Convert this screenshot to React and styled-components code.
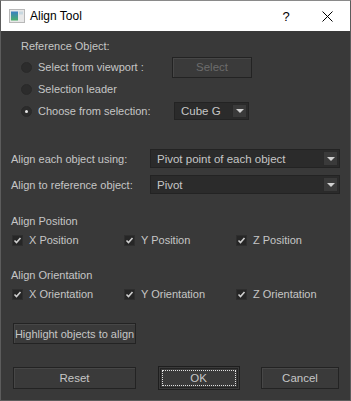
import React from 'react';
import styled, { createGlobalStyle } from 'styled-components';

const GlobalStyle = createGlobalStyle`
  html, body {
    margin: 0;
    padding: 0;
    background: #ffffff;
  }
  * {
    box-sizing: border-box;
  }
`;

const Window = styled.div`
  width: 351px;
  height: 401px;
  display: flex;
  flex-direction: column;
  border: 1px solid #5c5c5c;
  border-top-color: #8a8a8a;
  background: #393939;
  font-family: "Liberation Sans", Arial, sans-serif;
  font-size: 11px;
  color: #c6c6c6;
  overflow: hidden;
`;

const TitleBar = styled.div`
  height: 30px;
  flex-shrink: 0;
  display: flex;
  align-items: center;
  background: #ffffff;
  color: #000000;
  padding-left: 8px;
`;

const TitleText = styled.span`
  font-size: 12px;
  margin-left: 5px;
  flex: 1;
`;

const TitleButton = styled.div`
  width: ${props => props.w}px;
  height: 30px;
  display: flex;
  align-items: center;
  justify-content: center;
  font-size: 13px;
  color: #000;
`;

const Body = styled.div`
  flex: 1;
  display: flex;
  flex-direction: column;
  padding: 8px 11px 0 9px;
`;

const GroupLabel = styled.div`
  height: 14px;
  line-height: 14px;
  padding-left: ${props => props.indent || 0}px;
`;

const RefRows = styled.div`
  display: flex;
  flex-direction: column;
  padding-left: 11px;
  margin-top: 3px;
`;

const RefRow = styled.div`
  display: grid;
  grid-template-columns: 151px auto;
  align-items: center;
  height: 22px;
`;

const RadioLabel = styled.label`
  display: flex;
  align-items: center;
  gap: 6px;
`;

const RadioDot = styled.span`
  width: 11px;
  height: 11px;
  border-radius: 50%;
  background: #2c2c2c;
  border: 1px solid #2a2a2a;
  display: flex;
  align-items: center;
  justify-content: center;

  &::after {
    content: '';
    width: 3px;
    height: 3px;
    border-radius: 50%;
    background: ${props => (props.checked ? '#e6e6e6' : 'transparent')};
  }
`;

const Button = styled.div`
  width: ${props => props.w}px;
  height: ${props => props.h || 22}px;
  display: flex;
  align-items: center;
  justify-content: center;
  white-space: nowrap;
  background: #3a3a3a;
  border: 1px solid #232323;
  box-shadow: inset 1px 1px 0 #474747;
  color: ${props => (props.disabled ? '#6c6c6c' : '#c6c6c6')};
  font-size: ${props => props.fs || 11.5}px;
`;

const DefaultButton = styled.div`
  width: 82px;
  height: 24px;
  padding: 1px;
  background: #3a3a3a;
  border: 1px solid #1e1e1e;
  display: flex;
`;

const DefaultInner = styled.div`
  flex: 1;
  display: flex;
  align-items: center;
  justify-content: center;
  border: 1px solid #232323;
  outline: 1px dotted #e0e0e0;
  outline-offset: -3px;
  font-size: 11.5px;
  color: #c6c6c6;
  background: #3a3a3a;
`;

const Combo = styled.div`
  width: ${props => props.w}px;
  height: ${props => props.h || 19}px;
  margin-left: ${props => props.ml || 0}px;
  display: flex;
  align-items: center;
  background: #2b2b2b;
  border: 1px solid #232323;
  padding: 1px;
  font-size: 11.5px;
`;

const ComboText = styled.span`
  flex: 1;
  padding-left: 5px;
  color: #c6c6c6;
  white-space: nowrap;
`;

const ComboArrow = styled.span`
  width: 15px;
  height: 100%;
  display: flex;
  align-items: center;
  justify-content: center;
  background: #3a3a3a;
  border: 1px solid #2a2a2a;

  &::after {
    content: '';
    border-left: 4px solid transparent;
    border-right: 4px solid transparent;
    border-top: 4px solid #d0d0d0;
  }
`;

const AlignRows = styled.div`
  display: flex;
  flex-direction: column;
  gap: 7px;
  margin-top: 27px;
  padding-left: 1px;
`;

const AlignRow = styled.div`
  display: grid;
  grid-template-columns: 139px 190px;
  align-items: center;
`;

const Section = styled.div`
  margin-top: ${props => props.mt}px;
  padding-left: 1px;
`;

const CheckRow = styled.div`
  display: grid;
  grid-template-columns: repeat(3, 112px);
  align-items: center;
  height: 14px;
  margin-top: 5px;
  padding-left: 1px;
`;

const CheckLabel = styled.label`
  display: flex;
  align-items: center;
  gap: 6px;
`;

const CheckBox = styled.span`
  width: 11px;
  height: 11px;
  background: #262626;
  border: 1px solid #2e2e2e;
  display: flex;
  align-items: center;
  justify-content: center;
`;

const HighlightWrap = styled.div`
  margin-top: 22px;
  padding-left: 3px;
`;

const Footer = styled.div`
  display: flex;
  align-items: center;
  justify-content: space-between;
  margin-top: 22px;
  padding-left: 3px;
`;

const Check = () => (
  <CheckBox>
    <svg width="9" height="9" viewBox="0 0 9 9">
      <path d="M1.5 4.5 L3.5 6.5 L7.5 2" fill="none" stroke="#cfcfcf" strokeWidth="1.6" />
    </svg>
  </CheckBox>
);

const AppIcon = () => (
  <svg width="16" height="14" viewBox="0 0 16 14">
    <defs>
      <linearGradient id="ag" x1="0" y1="0" x2="0" y2="1">
        <stop offset="0" stopColor="#3a7fc4" />
        <stop offset="1" stopColor="#4caf6a" />
      </linearGradient>
    </defs>
    <rect x="0.5" y="0.5" width="15" height="13" fill="#e8e8e8" stroke="#b8b8b8" />
    <rect x="2" y="2.5" width="7" height="9" fill="url(#ag)" />
    <rect x="10" y="2.5" width="4" height="3" fill="#c8d8e0" />
  </svg>
);

const checks = [
  ['X Position', 'Y Position', 'Z Position'],
  ['X Orientation', 'Y Orientation', 'Z Orientation'],
];

export default function App() {
  return (
    <>
      <GlobalStyle />
      <Window>
        <TitleBar>
          <AppIcon />
          <TitleText>Align Tool</TitleText>
          <TitleButton w={36}>?</TitleButton>
          <TitleButton w={46}>
            <svg width="11" height="11" viewBox="0 0 11 11">
              <path d="M0.5 0.5 L10.5 10.5 M10.5 0.5 L0.5 10.5" stroke="#000" strokeWidth="1" />
            </svg>
          </TitleButton>
        </TitleBar>
        <Body>
          <GroupLabel indent={11}>Reference Object:</GroupLabel>
          <RefRows>
            <RefRow>
              <RadioLabel><RadioDot />Select from viewport :</RadioLabel>
              <Button w={80} h={21} disabled>Select</Button>
            </RefRow>
            <RefRow>
              <RadioLabel><RadioDot />Selection leader</RadioLabel>
            </RefRow>
            <RefRow>
              <RadioLabel><RadioDot checked />Choose from selection:</RadioLabel>
              <Combo w={75} h={18} ml={2}>
                <ComboText>Cube G</ComboText>
                <ComboArrow />
              </Combo>
            </RefRow>
          </RefRows>

          <AlignRows>
            <AlignRow>
              <span>Align each object using:</span>
              <Combo w={190}>
                <ComboText>Pivot point of each object</ComboText>
                <ComboArrow />
              </Combo>
            </AlignRow>
            <AlignRow>
              <span>Align to reference object:</span>
              <Combo w={190}>
                <ComboText>Pivot</ComboText>
                <ComboArrow />
              </Combo>
            </AlignRow>
          </AlignRows>

          <Section mt={20}>
            <GroupLabel>Align Position</GroupLabel>
            <CheckRow>
              {checks[0].map(c => (
                <CheckLabel key={c}><Check />{c}</CheckLabel>
              ))}
            </CheckRow>
          </Section>

          <Section mt={21}>
            <GroupLabel>Align Orientation</GroupLabel>
            <CheckRow>
              {checks[1].map(c => (
                <CheckLabel key={c}><Check />{c}</CheckLabel>
              ))}
            </CheckRow>
          </Section>

          <HighlightWrap>
            <Button w={123} h={21} fs={11}>Highlight objects to align</Button>
          </HighlightWrap>

          <Footer>
            <Button w={123}>Reset</Button>
            <DefaultButton>
              <DefaultInner>OK</DefaultInner>
            </DefaultButton>
            <Button w={78}>Cancel</Button>
          </Footer>
        </Body>
      </Window>
    </>
  );
}
